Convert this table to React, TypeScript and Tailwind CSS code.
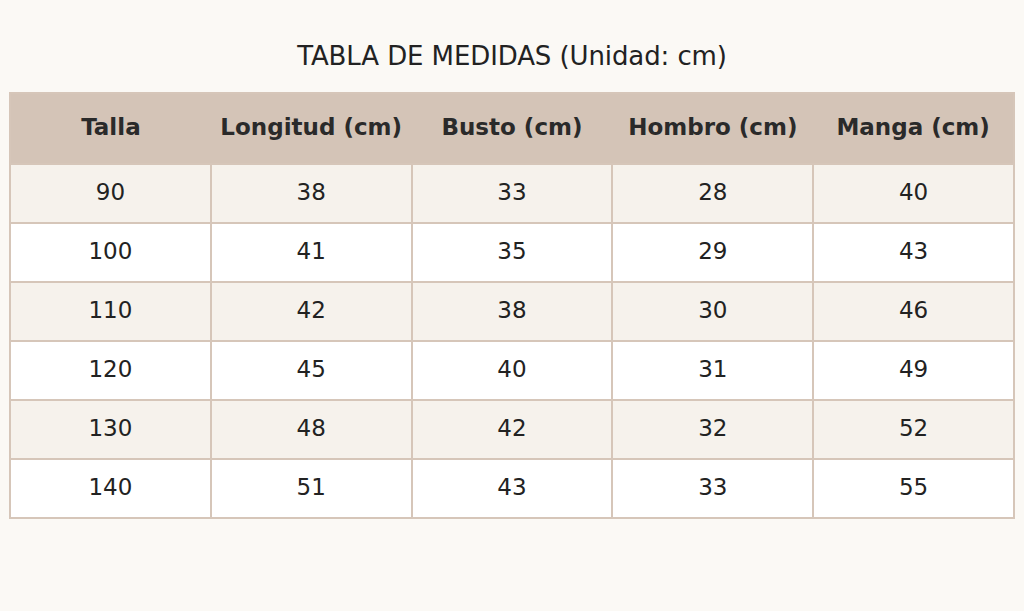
const headers = ['Talla', 'Longitud (cm)', 'Busto (cm)', 'Hombro (cm)', 'Manga (cm)'];

const rows = [
  ['90', '38', '33', '28', '40'],
  ['100', '41', '35', '29', '43'],
  ['110', '42', '38', '30', '46'],
  ['120', '45', '40', '31', '49'],
  ['130', '48', '42', '32', '52'],
  ['140', '51', '43', '33', '55'],
];

export default function App() {
  return (
    <div className="w-[1024px] h-[611px] bg-[#fbf9f5] font-['DejaVu_Sans',sans-serif] text-[#222]">
      <h1 className="pt-[39px] text-center text-[26px] leading-[34px] tracking-[-0.1px] text-[#222]">
        TABLA DE MEDIDAS (Unidad: cm)
      </h1>
      <div className="px-[9px] pt-[19px]">
        <table className="w-full table-fixed border-collapse border-2 border-[#d6c6b9]">
          <thead>
            <tr className="bg-[#d4c4b7]">
              {headers.map((h) => (
                <th key={h} className="h-[71px] pb-[3px] text-[23px] font-bold text-[#2a2a2a] text-center">
                  {h}
                </th>
              ))}
            </tr>
          </thead>
          <tbody>
            {rows.map((r, i) => (
              <tr key={r[0]} className={i % 2 === 0 ? 'bg-[#f6f2ec]' : 'bg-white'}>
                {r.map((c, j) => (
                  <td key={j} className="h-[59px] pb-[3px] border-2 border-[#d6c6b9] text-center text-[23px]">
                    {c}
                  </td>
                ))}
              </tr>
            ))}
          </tbody>
        </table>
      </div>
    </div>
  );
}
